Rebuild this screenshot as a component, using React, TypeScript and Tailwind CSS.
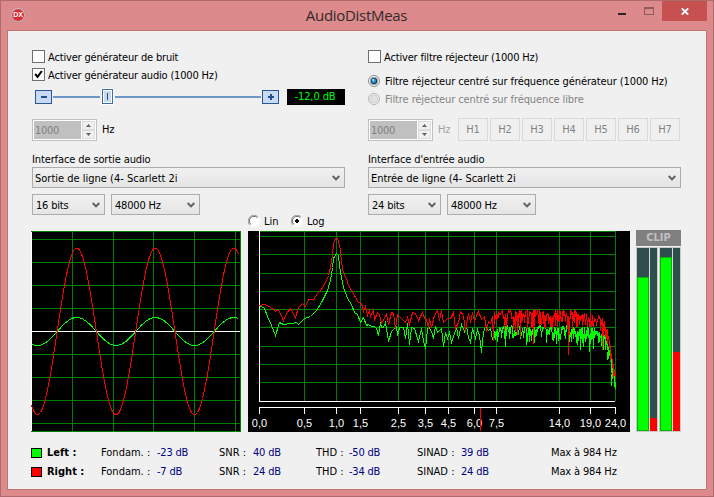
import React from 'react';

/* ---------- Data ---------- */

const STATUS = [
  { name: 'Left :', color: 'bg-[#00ff00]', fondam: '-23 dB', snr: '40 dB', thd: '-50 dB', sinad: '39 dB', max: 'Max à 984 Hz' },
  { name: 'Right :', color: 'bg-[#ff0000]', fondam: '-7 dB', snr: '24 dB', thd: '-34 dB', sinad: '24 dB', max: 'Max à 984 Hz' },
];

const HARMONICS = ['H1', 'H2', 'H3', 'H4', 'H5', 'H6', 'H7'];

const TICKS: [number, string][] = [
  [11, '0,0'], [56, '0,5'], [88, '1,0'], [112, '1,5'], [150, '2,5'], [177, '3,5'],
  [200, '4,5'], [226, '6,0'], [248, '7,5'], [311, '14,0'], [342, '19,0'], [367, '24,0'],
];

const RED_START =
  '11,74 16,73 21,75 27,80 30,78 35,89 38,82 42,77 47,86 50,76 54,72 57,75 60,68 65,68 69,62 73,58 77,51 80,44 82,36 84,24 85,12 87,7 89,7 90,10 92,19 93,31 95,42 98,47 100,54 106,64 110,71 113,72 115,80 117,75 119,84 121,79 122,85 125,78 126,89 129,81 131,83 133,92 138,83 140,93 143,81 145,82 147,97 149,83 153,87 157,91 159,86 161,93 164,81 167,82 170,89 174,81 177,89 178,88 180,97 181,87 183,96 186,84 189,79 191,89 193,79 195,91 199,87 202,87 205,81 207,97 210,91 212,80 215,84 217,100 220,82 222,91 224,81 226,90 228,84 230,80 233,88 236,85 238,100 240,90 242,92 244,85 245,109';

const GREEN_START =
  '11,74 16,77 19,85 23,94 27,104 31,91 35,93 43,92 48,91 50,93 56,87 62,85 68,79 73,71 79,59 82,49 84,36 85,27 88,22 90,24 91,34 93,46 95,56 99,67 103,73 106,81 109,83 112,91 115,86 118,94 120,93 123,95 126,95 128,97 130,104 132,91 133,96 135,96 137,91 140,110 143,100 148,95 149,104 151,96 155,96 157,107 159,92 161,113 163,96 166,97 170,110 173,97 175,110 177,117 179,98 180,95 183,100 185,107 187,95 189,101 193,97 195,115 197,101 199,107 201,101 203,111 206,102 208,96 210,107 213,93 216,100 218,95 220,106 222,111 224,97 227,107 229,98 231,104 233,121 235,101 237,95 240,99 242,97 244,108';

// [x, top, bottom] of the noise band
const RED_BAND = [[245, 79, 104], [256, 78, 102], [290, 78, 100], [325, 78, 98], [346, 82, 95], [354, 86, 102], [359, 97, 118], [362, 113, 138], [364, 126, 156], [367, 142, 161]];
const GREEN_BAND = [[245, 95, 112], [256, 94, 111], [325, 94, 112], [340, 96, 118], [350, 96, 114], [354, 99, 113], [358, 106, 125], [361, 116, 137], [364, 132, 156], [367, 150, 160]];
const RED_SPIKES: Record<number, number> = { 285: 112, 269: 103, 320: 123, 354: 118, 272: 105 };
const GREEN_SPIKES: Record<number, number> = { 257: 115, 278: 113, 304: 108, 308: 112, 332: 118, 341: 120, 345: 117 };

function noise(band: number[][], spikes: Record<number, number>, seed: number) {
  let s = seed;
  const rnd = () => {
    s = (s * 1103515245 + 12345) % 2147483648;
    return s / 2147483648;
  };
  const pts: string[] = [];
  for (let x = 246; x <= 367; x++) {
    let i = 0;
    while (i < band.length - 2 && band[i + 1][0] < x) i++;
    const [a, b] = [band[i], band[i + 1]];
    const t = (x - a[0]) / (b[0] - a[0]);
    const top = a[1] + (b[1] - a[1]) * t;
    const bottom = a[2] + (b[2] - a[2]) * t;
    const edge = x > 353;
    const hi = top + (edge ? rnd() * 4 : Math.pow(rnd(), 1.3) * 9);
    const lo = edge
      ? top + (bottom - top) * (0.15 + 0.85 * rnd())
      : hi + (bottom - hi) * Math.pow(rnd(), x < 290 ? 1.9 : 1.4);
    pts.push(`${x},${hi.toFixed(1)}`);
    // the bins are less crowded on the lower frequencies
    if (spikes[x] || x > 290 || rnd() > 0.35) pts.push(`${x},${(spikes[x] ?? lo).toFixed(1)}`);
  }
  return pts.join(' ');
}

function sine(amplitude: number) {
  const pts: string[] = [];
  for (let x = 0; x <= 207; x++) {
    const y = 100.5 - amplitude * Math.cos(((x - 45.3) / 78.5) * 2 * Math.PI);
    pts.push(`${x + 0.5},${y.toFixed(1)}`);
  }
  return pts.join(' ');
}

/* ---------- Controls ---------- */

const CheckBox: React.FC<{ checked?: boolean; children: React.ReactNode }> = ({ checked, children }) => (
  <div className="flex h-[17px] items-center gap-[3px] tracking-[-0.17px]">
    <div className="h-[13px] w-[13px] border border-[#707070] bg-white">
      {checked && (
        <svg width="11" height="11" viewBox="0 0 11 11">
          <path d="M2.2 5 L4.6 7.8 L8.8 2" fill="none" stroke="#000" strokeWidth="2" />
        </svg>
      )}
    </div>
    <span className="pt-[2px]">{children}</span>
  </div>
);

const Radio: React.FC<{ checked?: boolean; disabled?: boolean; children: React.ReactNode }> = ({ checked, disabled, children }) => (
  <div className={`flex h-[18px] items-center gap-[5px] tracking-[-0.1px] ${disabled ? 'text-[#838383]' : ''}`}>
    <svg width="12" height="12" viewBox="0 0 12 12">
      <circle cx="6" cy="6" r="5.5" fill="#f4f4f4" stroke={disabled ? '#b4b4b4' : '#8e8f8f'} />
      <circle cx="6" cy="6" r="3.8" fill={checked ? '#1c3c5c' : '#e2e2e2'} stroke={checked ? '#b8c0c8' : '#c8c8c8'} strokeWidth="0.8" />
      {checked && <circle cx="5.8" cy="5.8" r="2.2" fill="#2a9bd8" />}
      {checked && <circle cx="5.2" cy="5" r="1" fill="#b5e6fb" />}
    </svg>
    <span className="pt-[2px]">{children}</span>
  </div>
);

const ClassicRadio: React.FC<{ checked?: boolean; children: React.ReactNode }> = ({ checked, children }) => (
  <div className="flex items-center gap-1">
    <svg width="12" height="12" viewBox="0 0 12 12">
      <circle cx="6" cy="6" r="5" fill="#fff" />
      <path d="M1.9 10.1 A5.6 5.6 0 0 1 10.1 1.9" fill="none" stroke="#a0a0a0" />
      <path d="M2.7 9.3 A4.6 4.6 0 0 1 9.3 2.7" fill="none" stroke="#696969" />
      <path d="M10.1 1.9 A5.6 5.6 0 0 1 1.9 10.1" fill="none" stroke="#fff" />
      {checked && <path d="M5 4h2v1h1v2h-1v1h-2v-1h-1v-2h1z" fill="#000" />}
    </svg>
    <span className="pt-[2px]">{children}</span>
  </div>
);

const Spin: React.FC = () => (
  <div className="flex h-[22px] w-[65px] gap-px border border-[#c0c0c0] bg-white p-px">
    <div className="flex w-[47px] items-center bg-[#c0c0c0] pl-px leading-none tracking-[-0.3px] text-[#808080]">1000</div>
    <div className="flex flex-1 flex-col">
      {['M0 3 L2.5 0 L5 3z', 'M0 0 L2.5 3 L5 0z'].map((d) => (
        <div key={d} className="flex flex-1 items-center justify-center border border-[#dcdcdc] bg-[#f0f0f0]">
          <svg width="5" height="3" viewBox="0 0 5 3">
            <path d={d} fill="#606060" />
          </svg>
        </div>
      ))}
    </div>
  </div>
);

const Combo: React.FC<{ className: string; children: React.ReactNode }> = ({ className, children }) => (
  <div className={`flex h-[21px] items-center justify-between border border-[#acacac] bg-linear-to-b from-[#f0f0f0] to-[#e5e5e5] pr-1 ${className}`}>
    <span className="pt-[2px]">{children}</span>
    <svg width="8" height="7" viewBox="0 0 8 7" className="mt-px">
      <path d="M0.7 1 L4 4.4 L7.3 1" fill="none" stroke="#606060" strokeWidth="2" />
    </svg>
  </div>
);

const StepButton: React.FC<{ plus?: boolean }> = ({ plus }) => (
  <div className="flex h-[14px] w-[17px] items-center justify-center border border-[#2a5699] bg-[#c7daf1]">
    <svg width="7" height="6" viewBox="0 0 7 6" shapeRendering="crispEdges">
      <path d="M1 2h6v2h-6z" fill="#244e8e" />
      {plus && <path d="M3 0h2v6h-2z" fill="#244e8e" />}
    </svg>
  </div>
);

const Slider: React.FC = () => (
  <div className="flex h-[17px] items-center">
    <div className="ml-[3px] flex w-[244px] items-center gap-px">
      <StepButton />
      <div className="h-[2px] w-[47px] bg-[#7096c8]" />
      <div className="flex h-[17px] w-[13px] border border-white bg-white">
        <div className="flex flex-1 items-center justify-center border border-[#3d6ba5] bg-white">
          <div className="flex h-[11px] w-[7px] items-center justify-center bg-[#c7daf1]">
            <div className="h-[7px] w-px bg-[#244e8e]" />
          </div>
        </div>
      </div>
      <div className="h-[2px] flex-1 bg-[#7096c8]" />
      <StepButton plus />
    </div>
    <div className="ml-[8px] flex h-4 w-[58px] items-center justify-center bg-black pt-px pr-[2px] tracking-[-0.1px] text-[#00ff00]">-12,0 dB</div>
  </div>
);

/* ---------- Displays ---------- */

const Scope: React.FC = () => (
  <svg width="210" height="201" viewBox="0 0 210 201" shapeRendering="crispEdges" className="bg-black">
    <g fill="#008000">
      {[41, 82, 122, 163, 204, 209].map((x) => <rect key={x} x={x} y="0" width="1" height="201" />)}
      {[0, 8, 31, 54, 77, 123, 146, 169, 192, 200].map((y) => <rect key={y} x="0" y={y} width="210" height="1" />)}
    </g>
    <rect x="0" y="1" width="1" height="199" fill="#fff" />
    <rect x="1" y="100" width="208" height="1" fill="#fff" />
    <polyline points={sine(14)} fill="none" stroke="#00ff00" />
    <polyline points={sine(83.3)} fill="none" stroke="#ff0000" />
  </svg>
);

const Spectrum: React.FC = () => (
  <svg width="382" height="201" viewBox="0 0 382 201" className="bg-black">
    <g shapeRendering="crispEdges">
      <g fill="#008000">
        {TICKS.map(([x]) => <rect key={x} x={x} y="0" width="1" height="170" />)}
        {[0, 5, 23, 42, 60, 78, 96, 115, 133, 151].map((y) => <rect key={y} x="11" y={y} width="357" height="1" />)}
      </g>
      <g fill="#fff">
        <rect x="11" y="0" width="1" height="171" />
        <rect x="11" y="170" width="356" height="1" />
        <rect x="11" y="176" width="357" height="1" />
        {TICKS.map(([x]) => <rect key={x} x={x} y="176" width="1" height="7" />)}
      </g>
      <g fill="none" transform="translate(0.5 0.5)">
        <polyline points={`${GREEN_START} ${noise(GREEN_BAND, GREEN_SPIKES, 77)}`} stroke="#00ff00" />
        <polyline points={`${RED_START} ${noise(RED_BAND, RED_SPIKES, 1234)}`} stroke="#ff0000" />
        <path d="M351 100V110 M353 104V114 M355 106V118 M357 112V118 M359 120V128 M363 142V154" stroke="#00ff00" />
      </g>
    </g>
    <g fill="#fff" fontSize="11" textAnchor="middle" className="font-['Liberation_Sans',sans-serif] [font-stretch:normal]">
      {TICKS.map(([x, label]) => <text key={x} x={x + 0.5} y="196">{label}</text>)}
    </g>
    <rect x="232" y="177" width="1" height="23" fill="#ff0000" />
  </svg>
);

const Meter: React.FC<{ green: string; red: string }> = ({ green, red }) => (
  <div className="flex h-[185px] w-[22px] gap-px border border-[#c8c8c8] bg-[#d8d8d8]">
    <div className="flex w-[12px] flex-col justify-end bg-[#2f4f4f]">
      <div className={`border border-[#00b400] bg-[#00ff00] ${green}`} />
    </div>
    <div className="flex w-[7px] flex-col justify-end bg-[#2f4f4f]">
      <div className={`bg-[#ff0000] ${red}`} />
    </div>
  </div>
);

/* ---------- Window ---------- */

const TitleBar: React.FC = () => (
  <div className="flex h-[29px] [font-stretch:normal]">
    <svg width="16" height="16" viewBox="0 0 16 16" className="mt-[6px] ml-[9px]">
      <circle cx="8" cy="8" r="7.3" fill="#a89c9c" />
      <circle cx="8" cy="7.8" r="6.6" fill="#d9d0d0" />
      <circle cx="8" cy="8" r="6" fill="#dd2c33" />
      <text x="8" y="10.4" fontSize="7" fontWeight="bold" textAnchor="middle" fill="#fff" className="font-['Liberation_Sans',sans-serif]">DX</text>
    </svg>
    <div className="flex-1 pt-[3px] pl-[69px] text-center font-['Open_Sans',sans-serif] text-[15px] leading-[22px] tracking-[-0.3px] text-[#33292b]">AudioDistMeas</div>
    <div className="flex">
      <div className="mt-[12px] mr-[18px] h-[2px] w-2 bg-[#2d2326]" />
      <div className="mt-[6px] mr-[8px] h-2 w-[10px] border border-t-2 border-[#8c5c5e]" />
      <div className="mr-[6px] flex h-5 w-[45px] items-center justify-center bg-[#c75050]">
        <svg width="8" height="7" viewBox="0 0 8 7">
          <path d="M0.8 0.3 L7.2 6.7 M7.2 0.3 L0.8 6.7" stroke="#fff" strokeWidth="1.8" />
        </svg>
      </div>
    </div>
  </div>
);

const App: React.FC = () => (
  <div className="h-[497px] w-[714px] overflow-hidden border border-[#b06a6c] bg-[#dc8a8b] font-['DejaVu_Sans_Condensed','DejaVu_Sans',sans-serif] text-[11px] leading-[14px] whitespace-nowrap text-black [font-stretch:condensed]">
    <TitleBar />
    <div className="ml-[6px] h-[460px] w-[700px] border border-[#c17475] bg-[#f0f0f0] pt-[17px] pl-6">
      <div className="flex gap-[23px]">
        {/* Generator / output */}
        <div className="w-[313px]">
          <CheckBox>Activer générateur de bruit</CheckBox>
          <div className="mt-px mb-[5px]">
            <CheckBox checked>Activer générateur audio (1000 Hz)</CheckBox>
          </div>
          <Slider />
          <div className="mt-[14px] flex gap-[5px]">
            <Spin />
            <span className="pt-1 tracking-[-0.3px]">Hz</span>
          </div>
          <div className="mt-[12px] tracking-[-0.12px]">Interface de sortie audio</div>
          <Combo className="pl-[2px]">Sortie de ligne (4- Scarlett 2i</Combo>
          <div className="mt-[6px] flex gap-[6px]">
            <Combo className="w-[73px] pl-[3px] tracking-[-0.2px]">16 bits</Combo>
            <Combo className="w-[89px] pl-[3px] tracking-[-0.2px]">48000 Hz</Combo>
          </div>
        </div>

        {/* Notch filter / input */}
        <div className="w-[313px]">
          <CheckBox>Activer filtre réjecteur (1000 Hz)</CheckBox>
          <div className="mt-[7px]">
            <Radio checked>Filtre réjecteur centré sur fréquence générateur (1000 Hz)</Radio>
            <Radio disabled>Filtre réjecteur centré sur fréquence libre</Radio>
          </div>
          <div className="mt-[10px] flex h-[23px] items-end">
            <Spin />
            <span className="mb-1 ml-[5px] w-5 tracking-[-0.3px] text-[#a0a0a0]">Hz</span>
            <div className="flex gap-[2px]">
              {HARMONICS.map((h) => (
                <div key={h} className="flex h-[23px] w-[30px] items-center justify-center border border-[#d9d9d9] pt-px text-[#838383]">{h}</div>
              ))}
            </div>
          </div>
          <div className="mt-[12px] tracking-[-0.12px]">Interface d'entrée audio</div>
          <Combo className="pl-[2px] tracking-[-0.04px]">Entrée de ligne (4- Scarlett 2i</Combo>
          <div className="mt-[6px] flex gap-[6px]">
            <Combo className="w-[73px] pl-[3px] tracking-[-0.2px]">24 bits</Combo>
            <Combo className="w-[89px] pl-[3px] tracking-[-0.2px]">48000 Hz</Combo>
          </div>
        </div>
      </div>

      <div className="mb-1 ml-[216px] flex h-3 items-center">
        <div className="w-[43px]">
          <ClassicRadio>Lin</ClassicRadio>
        </div>
        <ClassicRadio checked>Log</ClassicRadio>
      </div>

      <div className="-ml-px flex h-[201px]">
        <Scope />
        <div className="w-[7px]" />
        <Spectrum />
        <div className="-mt-px ml-[6px]">
          <div className="mb-px h-4 w-[45px] bg-[#808080] text-center leading-4 font-bold text-[#c0c0c0]">CLIP</div>
          <div className="flex gap-px">
            <Meter green="h-[154px]" red="h-[13px]" />
            <Meter green="h-[174px]" red="h-[79px]" />
          </div>
        </div>
      </div>

      <div className="mt-[11px] -ml-px">
        {STATUS.map((s) => (
          <div key={s.name} className="flex h-[19px] items-center">
            <div className={`mr-[5px] h-[10px] w-[11px] border border-black ${s.color}`} />
            <b className="w-[54px]">{s.name}</b>
            <span className="w-[56px]">Fondam. :</span>
            <span className="w-[62px] tracking-[-0.2px] text-[#000080]">{s.fondam}</span>
            <span className="w-[34px]">SNR :</span>
            <span className="w-[63px] tracking-[-0.2px] text-[#000080]">{s.snr}</span>
            <span className="w-[33px]">THD :</span>
            <span className="w-[68px] tracking-[-0.2px] text-[#000080]">{s.thd}</span>
            <span className="w-[44px]">SINAD :</span>
            <span className="w-[90px] tracking-[-0.2px] text-[#000080]">{s.sinad}</span>
            <span className="tracking-[-0.15px]">{s.max}</span>
          </div>
        ))}
      </div>
    </div>
  </div>
);

export default App;
